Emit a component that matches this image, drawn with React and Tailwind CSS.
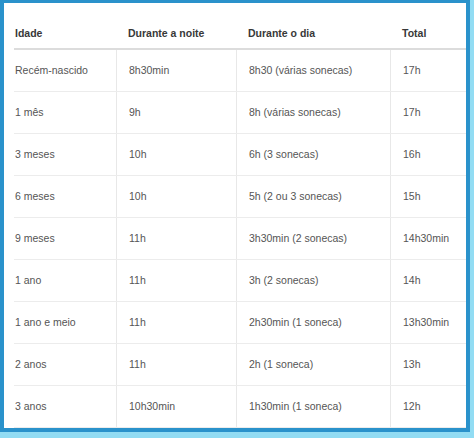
import React from "react";

const rows = [
	["Recém-nascido", "8h30min", "8h30 (várias sonecas)", "17h"],
	["1 mês", "9h", "8h (várias sonecas)", "17h"],
	["3 meses", "10h", "6h (3 sonecas)", "16h"],
	["6 meses", "10h", "5h (2 ou 3 sonecas)", "15h"],
	["9 meses", "11h", "3h30min (2 sonecas)", "14h30min"],
	["1 ano", "11h", "3h (2 sonecas)", "14h"],
	["1 ano e meio", "11h", "2h30min (1 soneca)", "13h30min"],
	["2 anos", "11h", "2h (1 soneca)", "13h"],
	["3 anos", "10h30min", "1h30min (1 soneca)", "12h"],
];

const headers = ["Idade", "Durante a noite", "Durante o dia", "Total"];

const cols = "grid grid-cols-[102px_120px_154px_70px]";

const App = () => {
	return (
		<div className="w-[474px] h-[438px] bg-[#92dcf3]" style={{ fontFamily: '"Liberation Sans", Arial, sans-serif' }}>
			<div className="w-[470px] h-[432px] bg-white border-[#2a92cb] border-l-4 border-r-4 border-t-[3px] border-b-4 pl-[10px]">
				{/* header */}
				<div className={`${cols} h-[47px] border-b-2 border-[#dcdcdc] items-end pb-[6px]`}>
					{headers.map((h, i) => (
						<div key={h} className={`text-[10.5px] font-bold text-[#383838] ${i === 0 ? "pl-px" : "pl-3"}`}>
							{h}
						</div>
					))}
				</div>
				{/* body */}
				{rows.map((r, ri) => (
					<div key={ri} className={`${cols} h-[42px] border-b border-[#ececec]`}>
						{r.map((c, ci) => (
							<div
								key={ci}
								className={`flex items-center text-[10.5px] text-[#555] ${ci === 0 ? "pl-px" : "pl-3 border-l border-[#e8e8e8]"}`}
							>
								{c}
							</div>
						))}
					</div>
				))}
			</div>
		</div>
	);
}

export default App;
